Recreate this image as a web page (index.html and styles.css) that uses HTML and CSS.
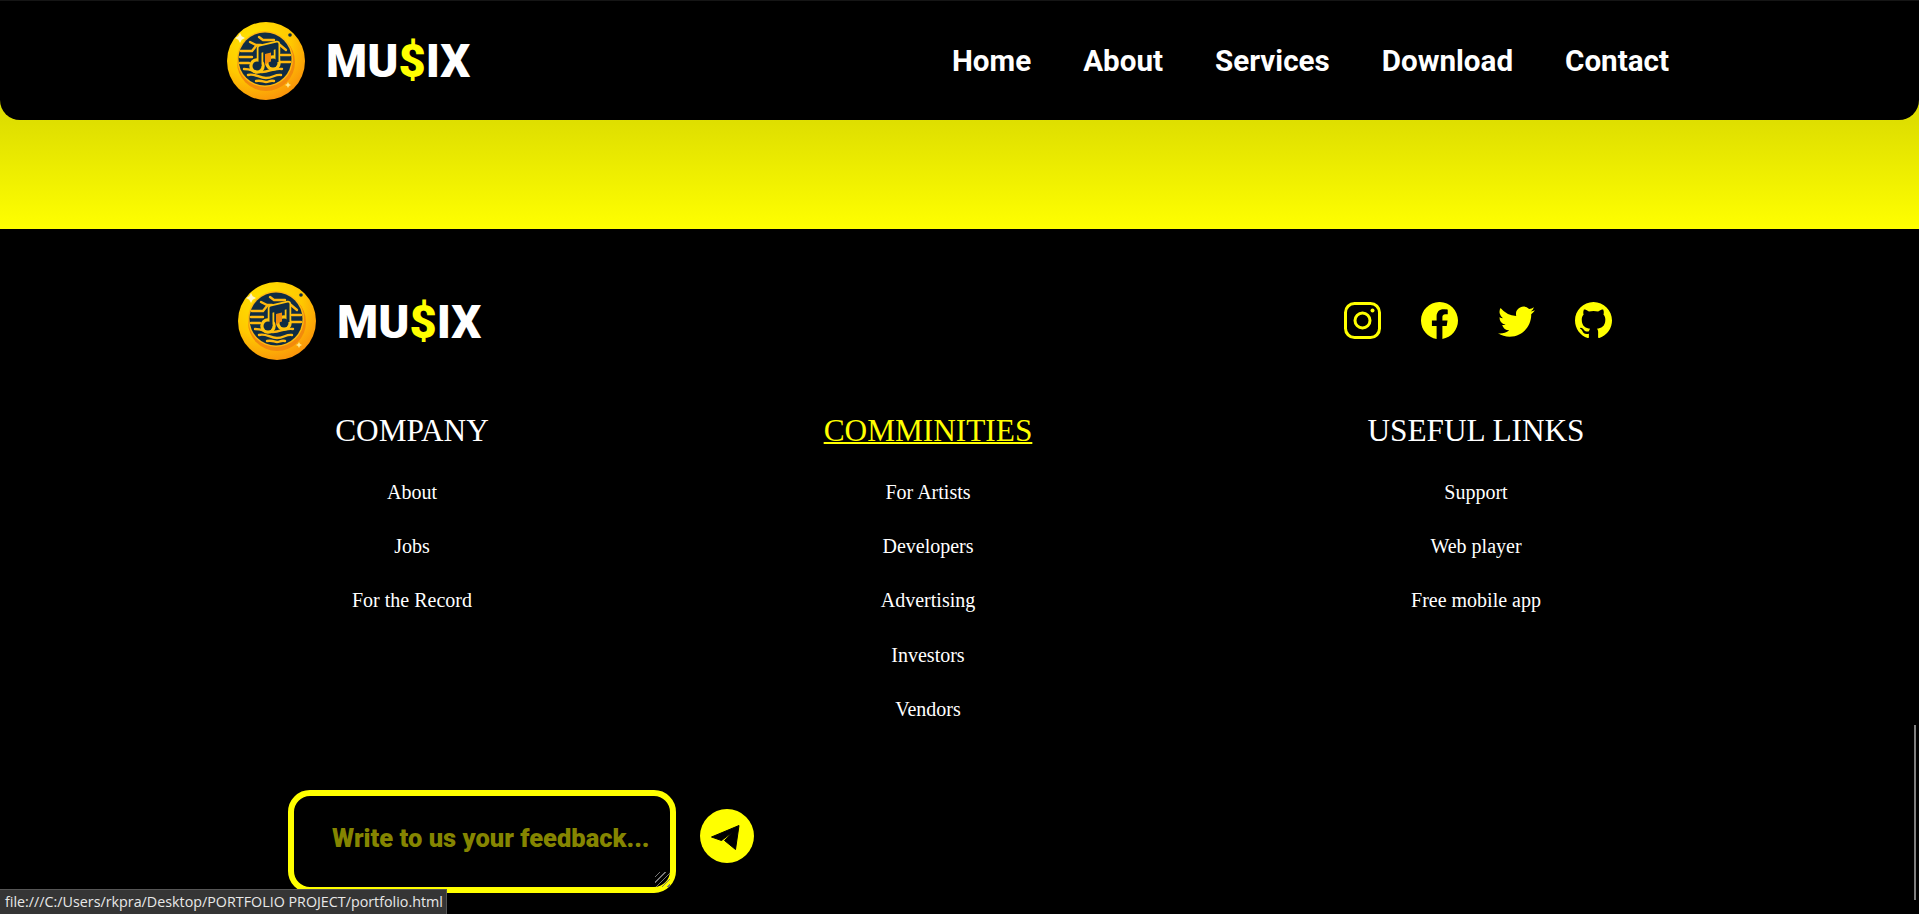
FILE: index.html
```html
<!doctype html>
<html>
  <head>
    <title>Musix</title>
    <link rel="stylesheet" href="styles.css">
  </head>
  <body>
    <svg class="defs" width="0" height="0">
      <defs>
        <radialGradient id="coin" cx="35%" cy="25%" r="85%">
          <stop offset="0" stop-color="#ffe600"/>
          <stop offset="0.55" stop-color="#ffc800"/>
          <stop offset="1" stop-color="#f98a0c"/>
        </radialGradient>
        <symbol id="logo" viewBox="0 0 78 78">
          <circle cx="39" cy="39" r="39" fill="url(#coin)"/>
          <circle cx="39" cy="40" r="29" fill="#f28a0c"/>
          <circle cx="38" cy="37" r="28" fill="#ffb90f"/>
          <circle cx="38" cy="37" r="26.500" fill="#0f2c44"/>
          <g fill="none" stroke="#ffb90f" stroke-width="2.400" stroke-linecap="round">
            <path d="M14 29h11l4-5"/>
            <path d="M13 35h12"/>
            <path d="M13 41h9"/>
            <path d="M17 47c8 0 10 3 18 3s10-4 20-3"/>
            <path d="M21 53c7-2 11 3 18 3s9-4 15-3"/>
            <path d="M29 59c6-1 7 1 10 1s4-2 8-1"/>
            <path d="M53 23l6 5M54 33h9M54 40h9"/>
            <path d="M23 20l6 3h5M32 15l4 3h11"/>
          </g>
          <g fill="none" stroke="#ffc40f" stroke-width="6.500" stroke-linejoin="round">
            <path d="M33 44V26l17-4v18"/>
            <circle cx="30" cy="44" r="4.500" fill="#ffc40f"/>
            <circle cx="46" cy="41" r="4.500" fill="#ffc40f"/>
          </g>
          <g fill="#0f2c44">
            <path d="M33 44V26l17-4v18" fill="none" stroke="#0f2c44" stroke-width="3" stroke-linejoin="round"/>
            <path d="M33 26l17-4v5l-17 4z"/>
            <circle cx="30" cy="44" r="4.500"/>
            <circle cx="46" cy="41" r="4.500"/>
            <path d="M38 32l6-1.500v9l-3 1-3 3z" fill="#f28a0c"/>
          </g>
          <path d="M13 11l1.700 3.300 3.300 1.700-3.300 1.700-1.700 3.300-1.700-3.300-3.300-1.700 3.300-1.700z" fill="#fff7c9"/>
          <circle cx="63" cy="13" r="1.800" fill="#0f2c44"/>
          <path d="M61 60l1 2 2 1-2 1-1 2-1-2-2-1 2-1z" fill="#ffe98a"/>
        </symbol>
      </defs>
    </svg>

    <header class="topbar">
      <a class="brand" href="#">
        <svg class="brand-icon"><use href="#logo"/></svg>
        <span class="brand-name">MU<span class="dollar">$</span>IX</span>
      </a>
      <nav class="nav">
        <a href="#">Home</a>
        <a href="#">About</a>
        <a href="#">Services</a>
        <a href="#">Download</a>
        <a href="#">Contact</a>
      </nav>
    </header>

    <div class="band"></div>

    <footer class="footer">
      <div class="footer-top">
        <a class="brand" href="#">
          <svg class="brand-icon"><use href="#logo"/></svg>
          <span class="brand-name">MU<span class="dollar">$</span>IX</span>
        </a>
        <div class="social">
          <a href="#">
            <svg viewBox="0 0 37 37" fill="none" stroke="#ffff00" stroke-width="3">
              <rect x="1.500" y="1.500" width="34" height="34" rx="9"/>
              <circle cx="18.500" cy="18.500" r="7.500"/>
              <circle cx="28.500" cy="8.500" r="2" fill="#ffff00" stroke="none"/>
            </svg>
          </a>
          <a href="#">
            <svg viewBox="0 0 16 16" fill="#ffff00"><path d="M16 8.049c0-4.446-3.582-8.05-8-8.05C3.58 0-.002 3.603-.002 8.05c0 4.017 2.926 7.347 6.750 7.951v-5.625h-2.030V8.050H6.750V6.275c0-2.017 1.195-3.131 3.022-3.131.876 0 1.791.157 1.791.157v1.980h-1.009c-.993 0-1.303.621-1.303 1.258v1.510h2.218l-.354 2.326H9.250V16c3.824-.604 6.750-3.934 6.750-7.951"/></svg>
          </a>
          <a href="#">
            <svg viewBox="0 0 16 16" fill="#ffff00"><path d="M5.026 15c6.038 0 9.341-5.003 9.341-9.334q.002-.211-.006-.422A6.700 6.700 0 0 0 16 3.542a6.700 6.700 0 0 1-1.889.518 3.300 3.300 0 0 0 1.447-1.817 6.500 6.500 0 0 1-2.087.793A3.286 3.286 0 0 0 7.875 6.030a9.320 9.320 0 0 1-6.767-3.429 3.290 3.290 0 0 0 1.018 4.382A3.300 3.300 0 0 1 .64 6.575v.045a3.290 3.290 0 0 0 2.632 3.218 3.200 3.200 0 0 1-.865.115 3 3 0 0 1-.614-.057 3.280 3.280 0 0 0 3.067 2.277A6.600 6.600 0 0 1 .78 13.580a6 6 0 0 1-.78-.045A9.340 9.340 0 0 0 5.026 15"/></svg>
          </a>
          <a href="#">
            <svg viewBox="0 0 16 16" fill="#ffff00"><path d="M8 0C3.580 0 0 3.580 0 8c0 3.540 2.290 6.530 5.470 7.590.4.070.55-.17.55-.38 0-.19-.01-.82-.01-1.490-2.010.37-2.530-.49-2.690-.94-.09-.23-.48-.94-.82-1.130-.28-.15-.68-.52-.01-.53.63-.01 1.080.58 1.230.82.720 1.210 1.870.87 2.330.66.070-.52.28-.87.51-1.070-1.780-.2-3.640-.89-3.640-3.950 0-.87.31-1.590.82-2.150-.08-.2-.36-1.020.08-2.120 0 0 .67-.21 2.200.82.64-.18 1.320-.27 2-.27s1.360.09 2 .27c1.530-1.040 2.200-.82 2.200-.82.44 1.100.16 1.920.08 2.120.51.56.82 1.270.82 2.150 0 3.070-1.870 3.750-3.650 3.950.29.25.54.73.54 1.480 0 1.070-.01 1.930-.01 2.200 0 .21.15.46.55.38A8.010 8.010 0 0 0 16 8c0-4.420-3.580-8-8-8"/></svg>
          </a>
        </div>
      </div>

      <div class="columns">
        <div class="col">
          <h2>COMPANY</h2>
          <a href="#">About</a>
          <a href="#">Jobs</a>
          <a href="#">For the Record</a>
        </div>
        <div class="col">
          <h2 class="hovered">COMMINITIES</h2>
          <a href="#">For Artists</a>
          <a href="#">Developers</a>
          <a href="#">Advertising</a>
          <a href="#">Investors</a>
          <a href="#">Vendors</a>
        </div>
        <div class="col">
          <h2>USEFUL LINKS</h2>
          <a href="#">Support</a>
          <a href="#">Web player</a>
          <a href="#">Free mobile app</a>
        </div>
      </div>

      <form class="feedback">
        <textarea class="feedback-box" placeholder="Write to us your feedback..."></textarea>
        <button class="send" type="button">
          <svg viewBox="0 0 53 54">
            <path d="M11 28 38.500 16.500 35 40.500 24 31.500 31.500 23.500 21 31.500z" fill="#000" stroke="#000" stroke-linejoin="round"/>
          </svg>
        </button>
      </form>
    </footer>

    <div class="scroll-thumb"></div>
    <div class="status">file:///C:/Users/rkpra/Desktop/PORTFOLIO PROJECT/portfolio.html</div>
  </body>
</html>
```

FILE: styles.css
```css
html,
body {
  margin: 0;
  height: 914px;
  overflow: hidden;
  background: #000;
}
body {
  font-family: "Liberation Serif", serif;
  color: #fff;
}
a {
  color: inherit;
  text-decoration: none;
}
.defs {
  display: block;
  height: 0;
}

.topbar {
  box-sizing: border-box;
  height: 120px;
  padding: 0 250px 0 227px;
  background: #000;
  border-top: 1px solid #151515;
  border-radius: 0 0 20px 20px;
  display: flex;
  align-items: center;
  justify-content: space-between;
  position: relative;
  z-index: 1;
}
.brand {
  display: flex;
  align-items: center;
  gap: 21px;
}
.brand-icon {
  width: 78px;
  height: 78px;
  flex: none;
}
.brand-name {
  font-family: Roboto, sans-serif;
  font-weight: 900;
  font-size: 47px;
  line-height: 1;
  color: #fff;
}
.dollar {
  color: #ffff00;
}
.nav {
  display: flex;
  gap: 52px;
  font-family: Roboto, sans-serif;
  font-weight: 700;
  font-size: 29.600px;
}

.band {
  height: 129px;
  margin-top: -20px;
  background: linear-gradient(#dede00 15%, #ffff00);
}

.footer {
  background: #000;
  padding-top: 53px;
}
.footer-top {
  display: flex;
  justify-content: space-between;
  align-items: center;
  padding: 0 307px 0 238px;
}
.social {
  display: flex;
  gap: 40px;
  margin-bottom: 2px;
}
.social a,
.social svg {
  display: block;
  width: 37px;
  height: 37px;
}

.columns {
  display: grid;
  grid-template-columns: 516px 516px 580px;
  margin: 49px 0 0 154px;
  text-align: center;
}
.col h2 {
  margin: 0 0 12px;
  font-size: 31.300px;
  font-weight: 400;
  line-height: 44px;
}
.col h2.hovered {
  color: #ffff00;
  text-decoration: underline;
  text-decoration-thickness: 2px;
}
.col a {
  display: block;
  font-size: 20px;
  line-height: 54.200px;
}

.feedback {
  display: flex;
  align-items: center;
  gap: 24px;
  padding-left: 288px;
  margin-top: 54px;
}
.feedback-box {
  box-sizing: border-box;
  width: 388px;
  height: 103px;
  padding: 27px 4px 0 38px;
  background: #000;
  border: 6px solid #ffff00;
  border-radius: 22px;
  outline: none;
  color: #ffff00;
  font-family: Roboto, sans-serif;
  font-weight: 900;
  font-size: 25.500px;
}
.feedback-box::placeholder {
  color: #858500;
  opacity: 1;
}
.feedback-box::-webkit-resizer {
  background: repeating-linear-gradient(135deg, transparent 0 3px, #777 3px 4px);
}
.send {
  width: 54px;
  height: 54px;
  margin-bottom: 12px;
  padding: 0;
  border: 0;
  border-radius: 50%;
  background: #ffff00;
}
.send svg {
  display: block;
  width: 54px;
  height: 54px;
}

.scroll-thumb {
  position: fixed;
  right: 3px;
  top: 725px;
  width: 2px;
  height: 175px;
  background: #808080;
}
.status {
  position: fixed;
  left: 0;
  bottom: 0;
  box-sizing: border-box;
  width: 447px;
  height: 25px;
  padding: 0 5px;
  background: #353535;
  border-top: 1px solid #555;
  border-right: 1px solid #555;
  color: #e8e8e8;
  font-family: "Open Sans", sans-serif;
  font-size: 14.300px;
  line-height: 24px;
  white-space: nowrap;
}
```
